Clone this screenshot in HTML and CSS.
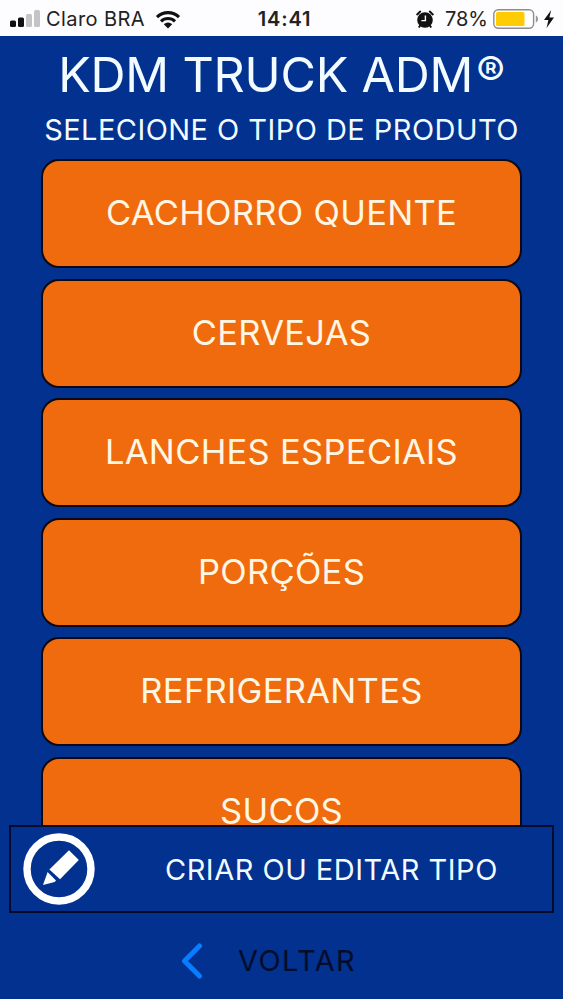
FILE: index.html
```
<!DOCTYPE html>
<html lang="pt-BR">
<head>
    <meta charset="UTF-8">
    <meta name="viewport" content="width=device-width, initial-scale=1.0">
    <title>KDM Truck ADM</title>
    <link rel="stylesheet" href="styles.css">
</head>
<body>
    <div class="status-bar">
        <div class="status-left">
            <svg class="signal" width="30" height="18" viewBox="0 0 30 18">
                <rect x="0" y="10.5" width="6" height="6.5" rx="1.5" fill="#111"/>
                <rect x="8" y="7.5" width="6" height="9.5" rx="1.5" fill="#111"/>
                <rect x="16" y="4" width="6" height="13" rx="1.5" fill="#c4c4c6"/>
                <rect x="24" y="0" width="6" height="17" rx="1.5" fill="#c4c4c6"/>
            </svg>
            <span class="carrier">Claro BRA</span>
            <svg class="wifi" width="26" height="19" viewBox="0 0 26 19">
                <path d="M2 7.2a15.5 15.5 0 0 1 22 0M6 11.3a10 10 0 0 1 14 0" fill="none" stroke="#111" stroke-width="3.1"/>
                <path d="M8.8 14.2a6 6 0 0 1 8.4 0L13 18.4z" fill="#111"/>
            </svg>
        </div>
        <div class="clock">14:41</div>
        <div class="status-right">
            <svg class="alarm" width="18" height="19" viewBox="0 0 18 19">
                <circle cx="9" cy="10" r="7.8" fill="#111"/>
                <path d="M1.2 4.4L4.2 1.6M16.8 4.4L13.8 1.6" stroke="#111" stroke-width="2" stroke-linecap="round"/>
                <path d="M4.2 15.5L2.8 17.5M13.8 15.5L15.2 17.5" stroke="#111" stroke-width="2"/>
                <path d="M9.4 5.5V10.6H5.4" fill="none" stroke="#fff" stroke-width="1.4"/>
            </svg>
            <span class="percent">78%</span>
            <svg class="battery" width="46" height="20" viewBox="0 0 46 20">
                <rect x="0.8" y="0.8" width="39.8" height="18.4" rx="4.5" fill="#fff" stroke="#8d8d8d" stroke-width="1.4"/>
                <rect x="3" y="3" width="28.5" height="14" rx="1.5" fill="#ffcb05"/>
                <path d="M42.8 6.5c3 1.2 3 5.8 0 7z" fill="#999"/>
            </svg>
            <svg class="bolt" width="10" height="18" viewBox="0 0 10 18">
                <path d="M7.2 0L0 10h4.4L2.6 18L10 7.4H5.4z" fill="#111"/>
            </svg>
        </div>
    </div>

    <div class="app">
        <h1>KDM TRUCK ADM<span class="reg">®</span></h1>
        <h2>SELECIONE O TIPO DE PRODUTO</h2>

        <div class="lista">
            <button class="produto">CACHORRO QUENTE</button>
            <button class="produto">CERVEJAS</button>
            <button class="produto">LANCHES ESPECIAIS</button>
            <button class="produto">PORÇÕES</button>
            <button class="produto">REFRIGERANTES</button>
            <button class="produto">SUCOS</button>
        </div>

        <button class="editar">
            <svg width="72" height="72" viewBox="0 0 72 72">
                <circle cx="36" cy="36" r="32" fill="none" stroke="#fff" stroke-width="7.4"/>
                <path d="M46 17.3L55.8 27L37 46.2L26.4 36.4z" fill="#fff"/>
                <path d="M24.6 39L33 47.6L31.6 49L20 52z" fill="#fff"/>
            </svg>
            <span>CRIAR OU EDITAR TIPO</span>
        </button>

        <button class="voltar">
            <svg width="22" height="36" viewBox="0 0 22 36">
                <path d="M18.5 3L3.5 18L18.5 33" fill="none" stroke="#0a7cff" stroke-width="5" stroke-linecap="round" stroke-linejoin="round"/>
            </svg>
            <span>VOLTAR</span>
        </button>
    </div>
</body>
</html>
```
FILE: styles.css
```
* {
    box-sizing: border-box;
}
body {
    margin: 0;
    height: 1000px;
    overflow: hidden;
    background-color: #fdfcfe;
    font-family: Inter, "Liberation Sans", sans-serif;
}
button {
    font-family: inherit;
    padding: 0;
    background: none;
    white-space: nowrap;
}
.status-bar {
    display: grid;
    grid-template-columns: 1fr auto 1fr;
    align-items: center;
    height: 36px;
    padding: 2px 9px 0 10px;
    color: #222;
    font-size: 20px;
}
.status-left, .status-right {
    display: flex;
    align-items: center;
}
.status-right {
    justify-content: flex-end;
}
.carrier {
    margin: 0 10px 0 6px;
    letter-spacing: 0.4px;
}
.clock {
    margin-left: 5px;
    font-weight: 600;
    letter-spacing: 0.8px;
}
.percent {
    margin: 0 5px 0 11px;
}
.bolt {
    margin-left: 5px;
}
.app {
    display: flex;
    flex-direction: column;
    height: 963px;
    background-color: #02318f;
    color: #f2fbff;
}
h1, h2 {
    margin: 0;
    text-align: center;
    white-space: nowrap;
}
h1 {
    display: flex;
    justify-content: center;
    height: 77px;
    line-height: 77px;
    font-size: 48.5px;
    font-weight: 400;
    letter-spacing: -0.2px;
}
.reg {
    margin-left: 3px;
    font-size: 43px;
    line-height: 70px;
    font-weight: 400;
}
h2 {
    height: 46px;
    line-height: 34px;
    font-size: 29px;
    font-weight: 400;
    letter-spacing: 0.45px;
}
.lista {
    display: flex;
    flex-direction: column;
    gap: 10.5px;
    height: 666px;
    padding: 0 41px;
    overflow: hidden;
}
.produto {
    flex: none;
    height: 109px;
    padding-bottom: 2px;
    border: 2px solid #0b0a14;
    border-radius: 18px;
    background-color: #ef6b0d;
    color: #fff6e4;
    font-size: 34.5px;
    font-weight: 400;
    letter-spacing: 0.3px;
}
.editar {
    display: flex;
    align-items: center;
    flex: none;
    height: 88px;
    margin: 0 9px;
    padding-left: 12px;
    border: 2px solid #060b2c;
    color: #f2fbff;
    font-size: 29px;
    font-weight: 400;
    letter-spacing: 0.5px;
}
.editar span {
    margin-left: 70px;
}
.voltar {
    display: flex;
    align-items: center;
    height: 86px;
    padding: 10px 0 0 181px;
    border: none;
    color: #040c2c;
    font-size: 29px;
    font-weight: 400;
    letter-spacing: 1.4px;
}
.voltar span {
    margin: -2px 0 0 35px;
}
```
